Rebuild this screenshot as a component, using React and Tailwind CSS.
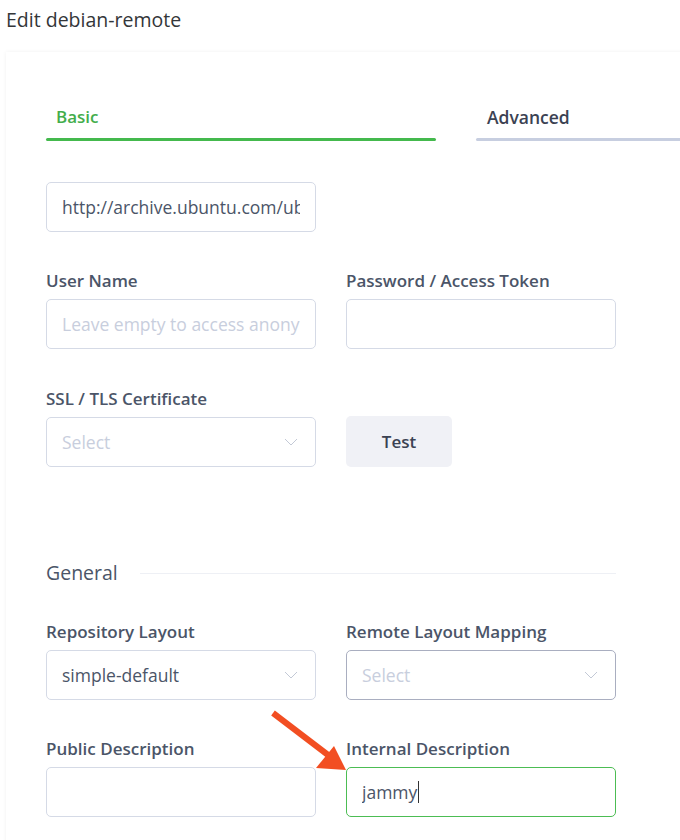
import React from "react";

const Chevron = ({ className = "" }) => (
  <svg width="14" height="8" viewBox="0 0 14 8" className={className} fill="none">
    <path d="M1 1l6 6 6-6" stroke="#c3c9d6" strokeWidth="1" />
  </svg>
);

const Label = ({ children }) => (
  <div className="text-[17px] leading-[24px] font-semibold text-[#4b5568] mb-[6px] whitespace-nowrap">{children}</div>
);

const Input = ({ children, className = "border-[#d5dae6]" }) => (
  <div className={`h-[50px] w-[270px] border rounded-[5px] px-[15px] flex items-center text-[17.5px] text-[#4b5568] ${className}`}>
    <div className="flex-1 min-w-0 overflow-hidden whitespace-nowrap flex items-center">{children}</div>
  </div>
);

const Select = ({ value, placeholder, className = "border-[#d5dae6]" }) => (
  <div className={`h-[50px] w-[270px] border rounded-[5px] pl-[15px] pr-[17px] flex items-center justify-between text-[17.5px] ${className}`}>
    {value ? (
      <span className="text-[#4b5568]">{value}</span>
    ) : (
      <span className="text-[#c8cedd]">{placeholder}</span>
    )}
    <Chevron />
  </div>
);

export default function App() {
  return (
    <div
      className="relative w-[680px] h-[840px] overflow-hidden bg-white"
      style={{ fontFamily: '"Open Sans", "Noto Sans", sans-serif' }}
    >
      <div className="h-[40px] pl-[6px] leading-[40px] text-[19.5px] text-[#333639]">Edit debian-remote</div>
      <div className="ml-[6px] mt-[12px] bg-white shadow-[0_0_4px_rgba(0,0,0,0.06)] pl-[40px] pt-[53px] h-[900px] w-[720px]">
        {/* Tabs */}
        <div className="flex gap-[40px]">
          <div className="w-[390px] shrink-0">
            <div className="pl-[10px] text-[17px] leading-[24px] font-semibold text-[#43ad4b] pb-[9px]">Basic</div>
            <div className="h-[3px] rounded-full bg-[#44b94d]" />
          </div>
          <div className="w-[260px] shrink-0">
            <div className="pl-[11px] text-[17.5px] leading-[24px] font-semibold text-[#3b4253] pb-[9px]">Advanced</div>
            <div className="h-[3px] rounded-l-full bg-[#c7cee0]" />
          </div>
        </div>

        <div className="mt-[41px]">
          <Input>http://archive.ubuntu.com/ubuntu/</Input>
        </div>

        <div className="mt-[37px] flex gap-[30px]">
          <div>
            <Label>User Name</Label>
            <Input>
              <span className="text-[#c8cedd]">Leave empty to access anonymously</span>
            </Input>
          </div>
          <div>
            <Label>Password / Access Token</Label>
            <Input />
          </div>
        </div>

        <div className="mt-[38px] flex gap-[30px] items-end">
          <div>
            <Label>SSL / TLS Certificate</Label>
            <Select placeholder="Select" />
          </div>
          <div className="w-[106px] h-[51px] rounded-[5px] bg-[#f0f1f6] flex items-center justify-center text-[17px] font-semibold text-[#3b4253]">
            Test
          </div>
        </div>

        <div className="mt-[94px] w-[570px] flex items-center gap-[22px]">
          <div className="text-[19.5px] leading-[24px] text-[#4b5568]">General</div>
          <div className="flex-1 h-px bg-[#eef0f5]" />
        </div>

        <div className="mt-[35px] flex gap-[30px]">
          <div>
            <Label>Repository Layout</Label>
            <Select value="simple-default" />
          </div>
          <div>
            <Label>Remote Layout Mapping</Label>
            <Select placeholder="Select" className="border-[#a9aec0]" />
          </div>
        </div>

        <div className="mt-[37px] flex gap-[30px]">
          <div>
            <Label>Public Description</Label>
            <Input />
          </div>
          <div>
            <Label>Internal Description</Label>
            <Input className="border-[#4cbd53]">
              <span>jammy</span>
              <span className="inline-block w-px h-[22px] bg-[#333] ml-[1px]" />
            </Input>
          </div>
        </div>
      </div>

      {/* Arrow annotation */}
      <svg className="absolute left-[260px] top-[700px]" width="100" height="80" viewBox="0 0 100 80">
        <line x1="13" y1="13" x2="72" y2="58" stroke="#f24e22" strokeWidth="6" strokeLinecap="butt" />
        <polygon points="86,70 56,68 74,46" fill="#f24e22" />
      </svg>
    </div>
  );
}
